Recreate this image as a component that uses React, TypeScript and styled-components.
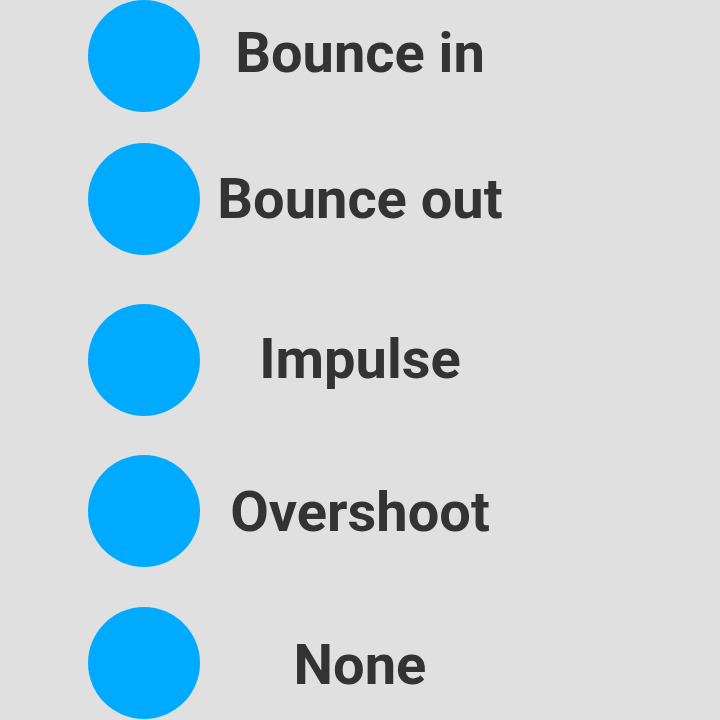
import React from "react";
import styled, { createGlobalStyle } from "styled-components";

const GlobalStyle = createGlobalStyle`
  html, body {
    margin: 0;
    padding: 0;
    background: #e0e0e0;
  }
  body {
    font-family: Roboto, "Liberation Sans", sans-serif;
  }
`;

const items = [
  { label: "Bounce in", top: 0, shift: -3 },
  { label: "Bounce out", top: 31, shift: 0 },
  { label: "Impulse", top: 49, shift: -1 },
  { label: "Overshoot", top: 39, shift: 1 },
  { label: "None", top: 40, shift: 2 },
];

const App = () => {
  return (
    <Main>
      <GlobalStyle />
      {items.map((el) => (
        <Row key={el.label} top={el.top}>
          <Dot />
          <Label shift={el.shift}>{el.label}</Label>
        </Row>
      ))}
    </Main>
  );
};

export default App;

const Main = styled.div`
  width: 720px;
  height: 720px;
  overflow: hidden;
  background: #e0e0e0;
  display: flex;
  flex-direction: column;
`;

const Row = styled.div<{ top: number }>`
  display: grid;
  grid-template-columns: 112px 320px;
  align-items: center;
  padding-left: 88px;
  margin-top: ${({ top }) => top}px;
  height: 112px;
  flex-shrink: 0;
`;

const Dot = styled.div`
  width: 112px;
  height: 112px;
  border-radius: 50%;
  background: #00aaff;
`;

const Label = styled.div<{ shift: number }>`
  text-align: center;
  font-size: 56px;
  font-weight: 700;
  line-height: 1;
  color: #333333;
  white-space: nowrap;
  transform: translateY(${({ shift }) => shift}px);
`;
